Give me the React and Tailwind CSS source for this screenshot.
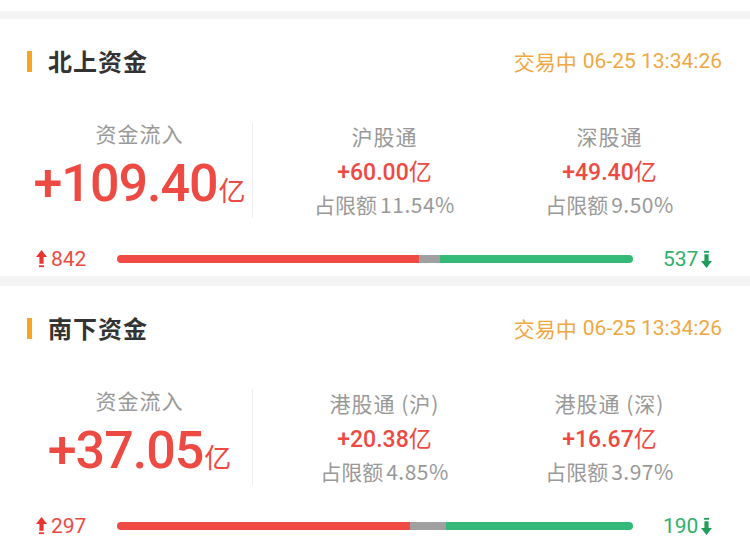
import React from "react";

const NUM = "font-['Roboto','Liberation_Sans',sans-serif]";
const CJK = "font-['Noto_Sans_CJK_SC','Noto_Sans',sans-serif]";

const sections = [
  {
    title: "北上资金",
    time: "06-25 13:34:26",
    total: "+109.40",
    cols: [
      { name: "沪股通", value: "+60.00", quota: "11.54%" },
      { name: "深股通", value: "+49.40", quota: "9.50%" },
    ],
    up: 842,
    flat: 60,
    down: 537,
  },
  {
    title: "南下资金",
    time: "06-25 13:34:26",
    total: "+37.05",
    cols: [
      { name: "港股通 (沪)", value: "+20.38", quota: "4.85%" },
      { name: "港股通 (深)", value: "+16.67", quota: "3.97%" },
    ],
    up: 297,
    flat: 36,
    down: 190,
  },
];

function UpArrow() {
  return (
    <svg width="11" height="18" viewBox="0 0 11 18" className="shrink-0">
      <path d="M5.5 0 L11 7 L7.6 7 L7.6 13.8 L3.4 13.8 L3.4 7 L0 7 Z" fill="#e8352f" />
      <rect x="2.9" y="15.3" width="5.2" height="1.8" fill="#e8352f" />
    </svg>
  );
}

function DownArrow() {
  return (
    <svg width="11" height="18" viewBox="0 0 11 18" className="shrink-0">
      <rect x="2.9" y="0.9" width="5.2" height="1.8" fill="#1e9e5a" />
      <path d="M3.4 4.2 L7.6 4.2 L7.6 11 L11 11 L5.5 18 L0 11 L3.4 11 Z" fill="#1e9e5a" />
    </svg>
  );
}

function Section({ data }) {
  const sum = data.up + data.flat + data.down;
  return (
    <div className="bg-white h-[257px] pt-[30px]">
      <div className="flex items-center justify-between h-[24px] pl-[27px] pr-[28px]">
        <div className="flex items-center">
          <div className="w-[5px] h-[21px] bg-[#f5a623]" />
          <span className={`${CJK} ml-[16px] text-[24px] leading-[24px] font-bold tracking-[1px] text-[#333333]`}>
            {data.title}
          </span>
        </div>
        <div className="flex items-center text-[#efa73f] text-[21px] leading-[24px]">
          <span className={CJK}>交易中</span>
          <span className={`${NUM} ml-[6px]`}>{data.time}</span>
        </div>
      </div>

      <div className="flex mt-[49px] h-[96px] px-[27px]">
        <div className="w-[225px] flex flex-col items-center">
          <div className={`${CJK} text-[21px] leading-[22px] tracking-[1px] text-[#999999]`}>资金流入</div>
          <div className="flex items-baseline mt-[14px]">
            <span className={`${NUM} text-[52px] leading-[52px] font-medium tracking-[-1px] text-[#ec4a42]`}>
              {data.total}
            </span>
            <span className={`${CJK} text-[27px] text-[#ec4a42] ml-[1px]`}>亿</span>
          </div>
        </div>
        <div className="w-px bg-[#eeeeee]" />
        <div className="flex ml-[19px]">
          {data.cols.map((c) => (
            <div key={c.name} className="w-[225px] flex flex-col items-center pt-[2px]">
              <div className={`${CJK} text-[21px] leading-[24px] tracking-[1px] text-[#999999]`}>{c.name}</div>
              <div className="flex items-baseline mt-[10px] text-[#ec4a42]">
                <span className={`${NUM} text-[23px] leading-[24px] font-medium`}>{c.value}</span>
                <span className={`${CJK} text-[23px] leading-[24px]`}>亿</span>
              </div>
              <div className="flex items-baseline mt-[7px] text-[#999999] text-[21px] leading-[24px]">
                <span className={CJK}>占限额</span>
                <span className={`${CJK} ml-[3px] tracking-[0.5px]`}>{c.quota}</span>
              </div>
            </div>
          ))}
        </div>
      </div>

      <div className="flex items-center h-[24px] mt-[29px] pl-[36px] pr-[36px]">
        <div className="flex items-center w-[62px] gap-[4px]">
          <UpArrow />
          <span className={`${NUM} text-[21px] leading-[24px] text-[#ec4a42]`}>{data.up}</span>
        </div>
        <div className="flex w-[516px] h-[8px] rounded-full overflow-hidden ml-[19px]">
          <div className="bg-[#ef4a43]" style={{ width: `${(data.up / sum) * 100}%` }} />
          <div className="bg-[#a0a0a0]" style={{ width: `${(data.flat / sum) * 100}%` }} />
          <div className="bg-[#35b978]" style={{ width: `${(data.down / sum) * 100}%` }} />
        </div>
        <div className="flex items-center ml-[30px] gap-[3px]">
          <span className={`${NUM} text-[21px] leading-[24px] text-[#2fae6c]`}>{data.down}</span>
          <DownArrow />
        </div>
      </div>
    </div>
  );
}

export default function App() {
  return (
    <div className="w-[750px] h-[541px] overflow-hidden bg-white">
      <div className="h-[11px] bg-white" />
      <div className="h-[8px] bg-[#f4f4f4]" />
      <Section data={sections[0]} />
      <div className="h-[10px] bg-[#f4f4f4]" />
      <Section data={sections[1]} />
    </div>
  );
}
